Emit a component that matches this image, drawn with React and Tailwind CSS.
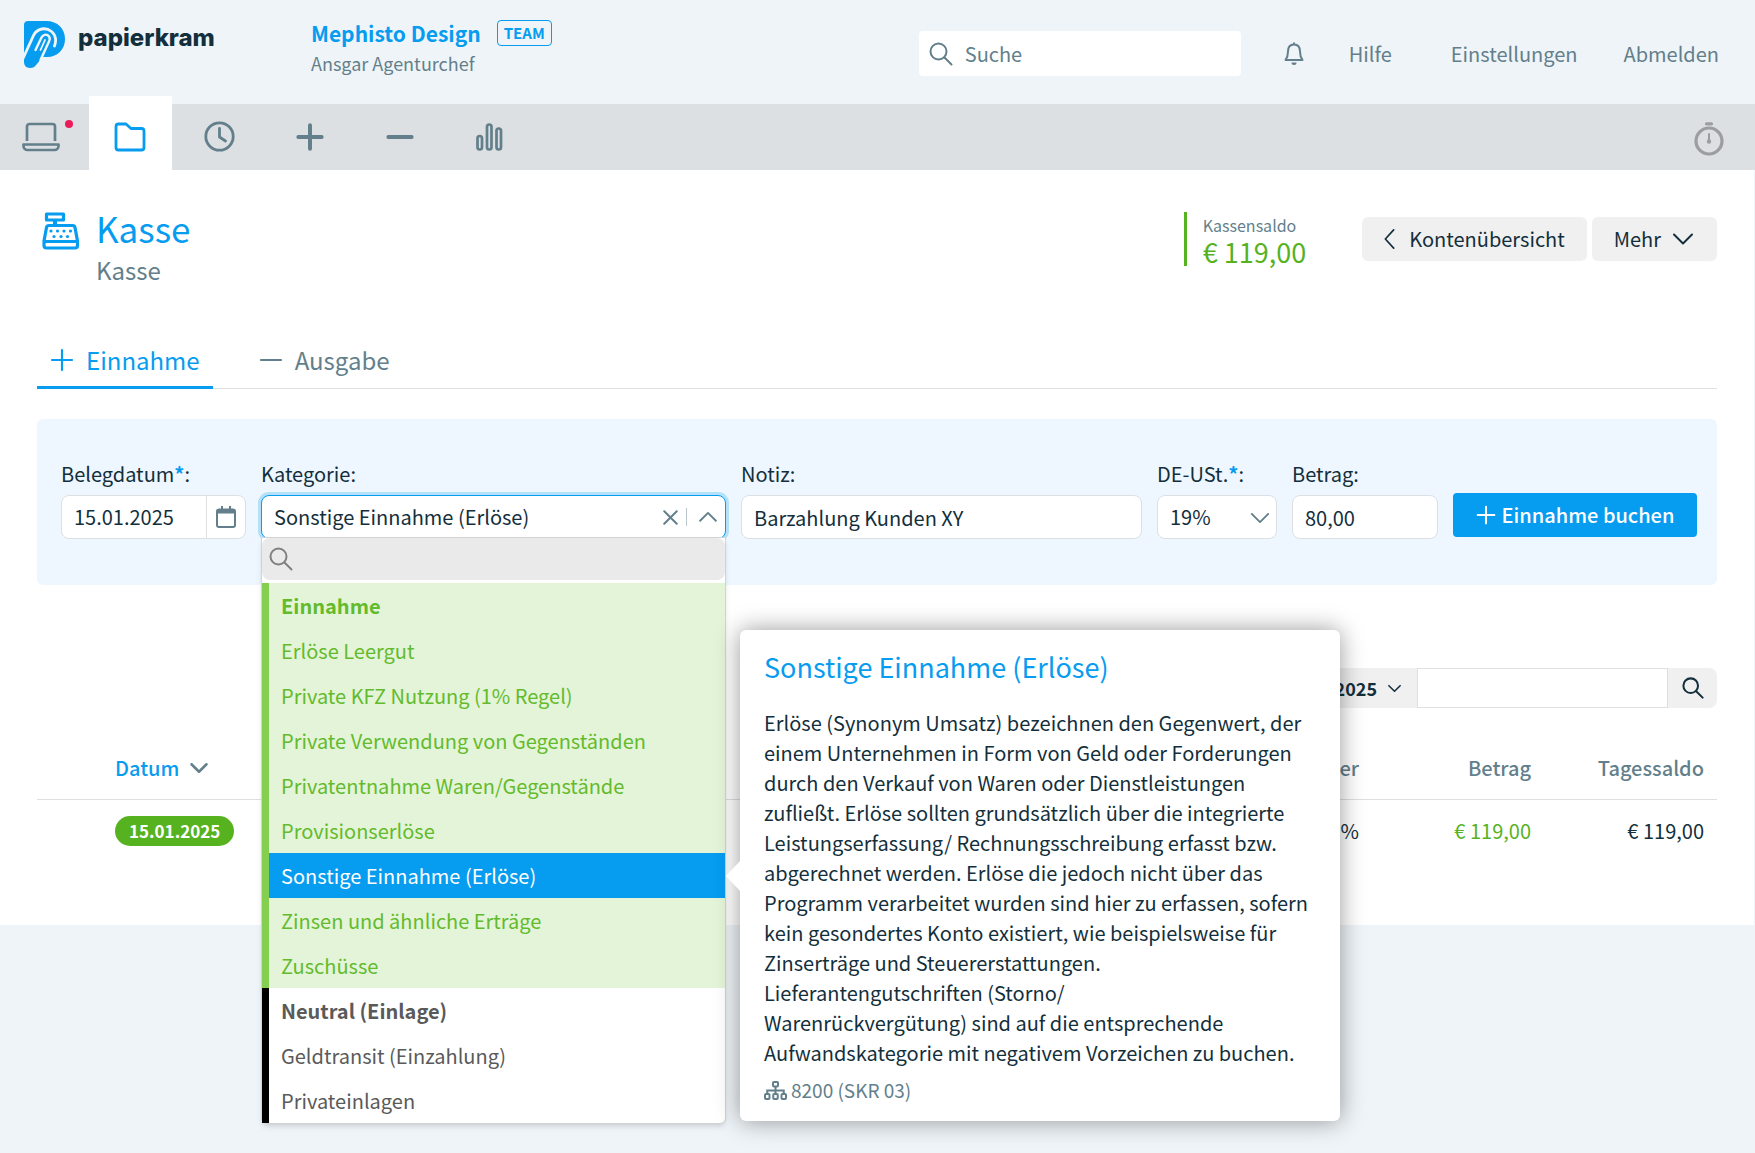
import React, { useState } from 'react';
import clsx from 'clsx';

const Icon = ({ className, size = 24, strokeWidth = 2, children }) => (
  <svg
    className={className}
    width={size}
    height={size}
    viewBox="0 0 24 24"
    fill="none"
    stroke="currentColor"
    strokeWidth={strokeWidth}
    strokeLinecap="round"
    strokeLinejoin="round"
    aria-hidden="true"
  >
    {children}
  </svg>
);

const SearchIcon = (props) => (
  <Icon {...props}>
    <circle cx="9.5" cy="9.5" r="8" />
    <path d="M15.5 15.5l7 7" />
  </Icon>
);

const PlusIcon = (props) => (
  <Icon {...props}>
    <path d="M12 2v20M2 12h20" />
  </Icon>
);

const MinusIcon = (props) => (
  <Icon {...props}>
    <path d="M2 12h20" />
  </Icon>
);

const ChevronDown = (props) => (
  <Icon {...props}>
    <path d="M3 7.5l9 9 9-9" />
  </Icon>
);

const Logo = () => (
  <svg width="42" height="48" viewBox="0 0 42 48" fill="none" aria-hidden="true">
    <path
      d="M4 0H22C34 0 41 8 41 18S34 36 23 36H18.500L12.500 43.500C11 46 9 47 6 47C2 47 0 44 0 41V4C0 1.500 1.500 0 4 0Z"
      fill="#069cf0"
    />
    <path d="M-1 37.500L9.500 14.500C13 7 22 6 27.500 10.500C32 14.500 32.500 19.500 30.500 25" stroke="#eff4f8" strokeWidth="2.800" strokeLinecap="round" />
    <path d="M11.500 29L17.500 16.500C19 13.500 22 13 24 14.500C26 16 26 18.500 25 20.500L16.500 39" stroke="#eff4f8" strokeWidth="2.400" strokeLinecap="round" />
    <path d="M16.500 29L21 19" stroke="#eff4f8" strokeWidth="1.800" strokeLinecap="round" />
  </svg>
);

const LaptopIcon = () => (
  <svg width="38" height="30" viewBox="0 0 38 30" fill="none" stroke="currentColor" strokeWidth="2.700" strokeLinejoin="round" aria-hidden="true">
    <path d="M5 19V4.500a2.500 2.500 0 0 1 2.500-2.500h23a2.500 2.500 0 0 1 2.500 2.500V19" />
    <path d="M1.500 22.500h35v1.500a4 4 0 0 1-4 4h-27a4 4 0 0 1-4-4z" />
  </svg>
);

const FolderIcon = () => (
  <svg width="32" height="30" viewBox="0 0 32 30" fill="none" stroke="currentColor" strokeWidth="2.800" strokeLinejoin="round" aria-hidden="true">
    <path d="M2 4.500A2.500 2.500 0 0 1 4.500 2H12l5 4.500h10.500A2.500 2.500 0 0 1 30 9v16.500a2.500 2.500 0 0 1-2.500 2.500h-23A2.500 2.500 0 0 1 2 25.500z" />
  </svg>
);

const ClockIcon = () => (
  <svg width="32" height="32" viewBox="0 0 32 32" fill="none" stroke="currentColor" strokeWidth="2.800" strokeLinecap="round" strokeLinejoin="round" aria-hidden="true">
    <circle cx="15.500" cy="15.500" r="13.700" />
    <path d="M15.500 7.500V16l6 4" />
  </svg>
);

const ChartIcon = () => (
  <svg width="30" height="28" viewBox="0 0 30 28" fill="none" stroke="currentColor" strokeWidth="2.700" aria-hidden="true">
    <rect x="2.500" y="13" width="4.500" height="13.500" rx="2.250" />
    <rect x="12" y="1.500" width="4.500" height="25" rx="2.250" />
    <rect x="21.500" y="5.500" width="4.500" height="21" rx="2.250" />
  </svg>
);

const StopwatchIcon = () => (
  <svg width="30" height="34" viewBox="0 0 30 34" fill="none" stroke="currentColor" strokeWidth="3.200" strokeLinecap="round" aria-hidden="true">
    <circle cx="15" cy="19" r="13" />
    <path d="M12.500 1.800h5" />
    <path d="M15 12v7" strokeWidth="2" />
    <circle cx="15" cy="19.500" r="1.200" strokeWidth="2" />
  </svg>
);

const BellIcon = () => (
  <svg width="20" height="24" viewBox="0 0 20 24" fill="none" stroke="currentColor" strokeWidth="2" strokeLinejoin="round" aria-hidden="true">
    <path d="M10 2.500C6 2.500 4 5.500 4 9.500c0 5-1 6.500-2.500 8.500h17C17 16 16 14.500 16 9.500c0-4-2-7-6-7zM10 .5v2" />
    <path d="M7.500 20.500h5a2.500 2.500 0 0 1-5 0z" fill="currentColor" stroke="none" />
  </svg>
);

const RegisterIcon = () => (
  <svg width="38" height="38" viewBox="0 0 38 38" fill="none" stroke="currentColor" strokeWidth="3.200" strokeLinejoin="round" aria-hidden="true">
    <path d="M4.500 2h17v6h-17z" />
    <path d="M13 8v5" strokeWidth="4" />
    <path d="M7 13.500h23.500a2.500 2.500 0 0 1 2.500 2L35.500 29v4.500a2.500 2.500 0 0 1-2.500 2.500h-28.500A2.500 2.500 0 0 1 2 33.500V29l2.500-13.500A2.500 2.500 0 0 1 7 13.500zM2 29.500h34" />
    <g fill="currentColor" stroke="none">
      <circle cx="9" cy="19" r="1.600" />
      <circle cx="15.500" cy="19" r="1.600" />
      <circle cx="22" cy="19" r="1.600" />
      <circle cx="28.500" cy="19" r="1.600" />
      <circle cx="12" cy="24.500" r="1.600" />
      <circle cx="19" cy="24.500" r="1.600" />
      <circle cx="25.500" cy="24.500" r="1.600" />
    </g>
  </svg>
);

const CalendarIcon = () => (
  <svg width="20" height="22" viewBox="0 0 20 22" fill="none" stroke="currentColor" strokeWidth="2" strokeLinejoin="round" aria-hidden="true">
    <rect x="1" y="3.500" width="18" height="17.500" rx="2" />
    <path d="M1.500 5.500h17" strokeWidth="4" />
    <path d="M6 0v4M14 0v4" />
  </svg>
);

const SitemapIcon = () => (
  <svg width="23" height="19" viewBox="0 0 23 19" fill="none" stroke="currentColor" strokeWidth="2" aria-hidden="true">
    <rect x="9" y="1" width="5" height="4.500" rx="1" />
    <rect x="1" y="13" width="4.500" height="5" rx="1" />
    <rect x="9.250" y="13" width="4.500" height="5" rx="1" />
    <rect x="17.500" y="13" width="4.500" height="5" rx="1" />
    <path d="M11.500 5.500V13M3.250 13V9.500h16.500V13" />
  </svg>
);

const navItems = [
  { label: 'Übersicht', icon: <LaptopIcon />, dot: true },
  { label: 'Projekte', icon: <FolderIcon />, active: true },
  { label: 'Zeiterfassung', icon: <ClockIcon /> },
  { label: 'Einnahmen', icon: <PlusIcon size={28} strokeWidth={3.4} /> },
  { label: 'Ausgaben', icon: <MinusIcon size={28} strokeWidth={3.4} /> },
  { label: 'Auswertung', icon: <ChartIcon /> },
];

const incomeCategories = [
  'Erlöse Leergut',
  'Private KFZ Nutzung (1% Regel)',
  'Private Verwendung von Gegenständen',
  'Privatentnahme Waren/Gegenstände',
  'Provisionserlöse',
  'Sonstige Einnahme (Erlöse)',
  'Zinsen und ähnliche Erträge',
  'Zuschüsse',
];

const neutralCategories = ['Geldtransit (Einzahlung)', 'Privateinlagen'];

const Header = () => (
  <header className="flex h-[104px] items-start pl-6 pr-9 text-[#637f8b]">
    <a href="#start" className="flex w-[287px] shrink-0 items-start pt-[21px] text-[#132f3c]">
      <Logo />
      <span className="ml-3 font-[Inter,sans-serif] text-2xl leading-[34px] font-extrabold">papierkram</span>
    </a>
    <div className="pt-[17px]">
      <div className="flex items-center gap-4">
        <span className="text-[21px] leading-8 font-bold text-[#069cf0]">Mephisto Design</span>
        <span className="rounded border border-[#069cf0] px-[6px] text-[15px] leading-6 font-bold text-[#069cf0]">TEAM</span>
      </div>
      <div className="text-[18px] leading-7">Ansgar Agenturchef</div>
    </div>
    <div className="ml-auto flex items-center pt-[31px]">
      <label className="flex h-[45px] w-[322px] items-center gap-3 rounded bg-white px-[10px]">
        <SearchIcon size={24} />
        <input type="text" placeholder="Suche" aria-label="Suche" className="min-w-0 flex-1 bg-transparent outline-none placeholder:text-[#637f8b]" />
      </label>
      <button type="button" aria-label="Benachrichtigungen" className="ml-[43px]">
        <BellIcon />
      </button>
      <a href="#hilfe" className="ml-[45px]">Hilfe</a>
      <a href="#einstellungen" className="ml-[59px]">Einstellungen</a>
      <a href="#abmelden" className="ml-[46px]">Abmelden</a>
    </div>
  </header>
);

const MainNav = () => (
  <nav className="flex h-[66px] items-end gap-[7px] bg-[#dce0e3] pr-[31px] text-[#637f8b]">
    {navItems.map((item) => (
      <a
        key={item.label}
        href="#nav"
        aria-label={item.label}
        className={clsx(
          'relative flex items-center justify-center pr-px',
          item.active ? 'h-[74px] bg-white pt-2 text-[#069cf0]' : 'h-[66px]',
          item.dot ? 'w-[82px]' : 'w-[83px]'
        )}
      >
        {item.icon}
        {item.dot && <span className="absolute top-4 right-[9px] size-2 rounded-full bg-[#ec1c5b]" />}
      </a>
    ))}
    <button type="button" aria-label="Stoppuhr" className="ml-auto mb-[14px] text-[#9b9d9e]">
      <StopwatchIcon />
    </button>
  </nav>
);

const PageHeader = () => (
  <div className="flex items-start">
    <div className="pl-[5px] text-[#069cf0]">
      <RegisterIcon />
    </div>
    <div className="ml-4">
      <h1 className="text-[35px] leading-8 text-[#069cf0]">Kasse</h1>
      <p className="mt-[6px] text-2xl leading-10 text-[#637f8b]">Kasse</p>
    </div>
    <div className="ml-auto border-l-[3px] border-[#56b31f] pl-4">
      <div className="text-base leading-[26px] text-[#637f8b]">Kassensaldo</div>
      <div className="text-[27px] leading-7 text-[#56b31f]">€ 119,00</div>
    </div>
    <div className="mt-[5px] ml-14 flex gap-[5px]">
      <a href="#konten" className="flex h-11 items-center rounded-md bg-[#f0f0f0] pr-[22px] pl-5">
        <Icon size={20} className="mr-[7px]">
          <path d="M14 1L4 12l10 11" />
        </Icon>
        Kontenübersicht
      </a>
      <button type="button" className="flex h-11 items-center rounded-md bg-[#f0f0f0] px-[22px]">
        Mehr
        <ChevronDown size={24} className="ml-[10px]" />
      </button>
    </div>
  </div>
);

const Required = () => <span className="font-bold text-[#069cf0]">*</span>;

const CategoryMenu = ({ selected, onSelect }) => (
  <div className="absolute top-[42px] right-0 left-0 z-10 rounded-b-md border border-[#d0d4d6] bg-white shadow-md">
    <label className="mb-[3px] flex h-[42px] items-center rounded-lg bg-[#eaeaea] px-[7px] text-[#808080]">
      <SearchIcon size={24} />
      <input type="text" aria-label="Kategorie suchen" className="ml-2 min-w-0 flex-1 bg-transparent outline-none" />
    </label>
    <ul role="listbox" aria-label="Kategorie" className="overflow-hidden rounded-br-md leading-[45px]">
      <li role="presentation" className="border-l-[7px] border-[#84cf4f] bg-[#e4f4d8] pl-3 font-bold text-[#63bb2c]">
        Einnahme
      </li>
      {incomeCategories.map((name) => (
        <li
          key={name}
          role="option"
          aria-selected={name === selected}
          onClick={() => onSelect(name)}
          className={clsx(
            'cursor-pointer border-l-[7px] border-[#84cf4f] pl-3',
            name === selected ? 'bg-[#069cf0] text-white' : 'bg-[#e4f4d8] text-[#63bb2c]'
          )}
        >
          {name}
        </li>
      ))}
      <li role="presentation" className="border-l-[7px] border-black pl-3 font-bold text-[#5a5a5a]">
        Neutral (Einlage)
      </li>
      {neutralCategories.map((name) => (
        <li
          key={name}
          role="option"
          aria-selected={name === selected}
          onClick={() => onSelect(name)}
          className="cursor-pointer border-l-[7px] border-black pl-3 text-[#5a5a5a]"
        >
          {name}
        </li>
      ))}
    </ul>
  </div>
);

const CategoryHint = () => (
  <div
    role="tooltip"
    className="absolute top-[135px] left-full z-20 ml-[14px] w-[600px] rounded-md bg-white px-6 pt-5 pb-[15px] shadow-[0_0_24px_rgba(0,0,0,0.4)]"
  >
    <svg className="absolute top-[231px] -left-[14px] text-white" width="14" height="30" viewBox="0 0 14 30" aria-hidden="true">
      <path d="M14 0L0 15l14 15z" fill="currentColor" />
    </svg>
    <h2 className="text-[27px] leading-[34px] text-[#069cf0]">Sonstige Einnahme (Erlöse)</h2>
    <p className="mt-6 leading-[30px]">
      Erlöse (Synonym Umsatz) bezeichnen den Gegenwert, der einem Unternehmen in Form von Geld oder Forderungen
      durch den Verkauf von Waren oder Dienstleistungen zufließt. Erlöse sollten grundsätzlich über die integrierte
      Leistungserfassung/ Rechnungsschreibung erfasst bzw. abgerechnet werden. Erlöse die jedoch nicht über das
      Programm verarbeitet wurden sind hier zu erfassen, sofern kein gesondertes Konto existiert, wie
      beispielsweise für Zinserträge und Steuererstattungen. Lieferantengutschriften (Storno/
      <br />
      Warenrückvergütung) sind auf die entsprechende Aufwandskategorie mit negativem Vorzeichen zu buchen.
    </p>
    <p className="mt-[6px] flex items-center gap-1 text-[19px] leading-8 text-[#637f8b]">
      <SitemapIcon />
      8200 (SKR 03)
    </p>
  </div>
);

const BookingForm = () => {
  const [category, setCategory] = useState('Sonstige Einnahme (Erlöse)');
  const [open, setOpen] = useState(true);

  const handleSelect = (name) => {
    setCategory(name);
    setOpen(false);
  };

  return (
    <form className="mt-[30px] flex items-end gap-[15px] rounded-md bg-[#eef7ff] pt-[43px] pr-5 pb-[46px] pl-6">
      <div className="w-[185px] shrink-0">
        <label htmlFor="datum" className="mb-[9px] block leading-6">
          Belegdatum<Required />:
        </label>
        <div className="flex h-11 overflow-hidden rounded-lg border border-[#dce0e3] bg-white">
          <input id="datum" type="text" defaultValue="15.01.2025" className="min-w-0 flex-1 px-3 outline-none" />
          <button type="button" aria-label="Kalender öffnen" className="flex w-[39px] items-center justify-center border-l border-[#dce0e3] text-[#637f8b]">
            <CalendarIcon />
          </button>
        </div>
      </div>

      <div className="w-[465px] shrink-0">
        <label htmlFor="kategorie" className="mb-[9px] block leading-6">Kategorie:</label>
        <div className="relative">
          <div className="flex h-11 items-center rounded-lg border border-[#069cf0] bg-white pr-2 pl-3 text-[#637f8b] ring-3 ring-[#b5e1f8]">
            <button id="kategorie" type="button" aria-expanded={open} onClick={() => setOpen(!open)} className="flex-1 text-left text-[#132f3c]">
              {category}
            </button>
            <button type="button" aria-label="Auswahl löschen" onClick={() => setCategory('')}>
              <Icon size={15} strokeWidth={3.2}>
                <path d="M2 2l20 20M22 2L2 22" />
              </Icon>
            </button>
            <span className="mr-3 ml-2 h-[18px] w-px bg-[#b9c6cc]" />
            <Icon size={18} strokeWidth={2.5}>
              <path d="M1.500 17L12 6.500 22.500 17" />
            </Icon>
          </div>
          {open && <CategoryMenu selected={category} onSelect={handleSelect} />}
          {open && <CategoryHint />}
        </div>
      </div>

      <div className="min-w-0 flex-1">
        <label htmlFor="notiz" className="mb-[9px] block leading-6">Notiz:</label>
        <input id="notiz" type="text" defaultValue="Barzahlung Kunden XY" className="h-11 w-full rounded-lg border border-[#dce0e3] bg-white px-3 outline-none" />
      </div>

      <div className="w-[120px] shrink-0">
        <label htmlFor="ust" className="mb-[9px] block leading-6">
          DE-USt.<Required />:
        </label>
        <div className="relative">
          <select id="ust" defaultValue="19" className="h-11 w-full appearance-none rounded-lg border border-[#dce0e3] bg-white px-3 outline-none">
            <option value="19">19%</option>
            <option value="7">7%</option>
            <option value="0">0%</option>
          </select>
          <ChevronDown size={22} className="pointer-events-none absolute top-3 right-[6px] text-[#637f8b]" />
        </div>
      </div>

      <div className="w-[146px] shrink-0">
        <label htmlFor="betrag" className="mb-[9px] block leading-6">Betrag:</label>
        <input id="betrag" type="text" defaultValue="80,00" className="h-11 w-full rounded-lg border border-[#dce0e3] bg-white px-3 outline-none" />
      </div>

      <button type="button" className="mb-0.5 flex h-11 w-[244px] shrink-0 items-center justify-center gap-[6px] rounded bg-[#069cf0] font-medium text-white">
        <PlusIcon size={20} strokeWidth={2.5} />
        Einnahme buchen
      </button>
    </form>
  );
};

const EntryFilter = () => (
  <div className="mt-[83px] flex h-10 justify-end">
    <button type="button" className="flex items-center gap-[10px] rounded-l-lg bg-[#f0f0f0] pr-[15px] pl-4 text-[18px] font-bold">
      2025
      <ChevronDown size={15} strokeWidth={2.5} />
    </button>
    <input type="text" aria-label="Buchungen durchsuchen" className="w-[251px] border border-[#dce0e3] bg-white px-3 outline-none" />
    <button type="button" aria-label="Suchen" className="flex w-[49px] items-center justify-center rounded-r-lg bg-[#f0f0f0]">
      <SearchIcon size={22} strokeWidth={2.2} />
    </button>
  </div>
);

const EntryTable = () => (
  <table className="mt-[31px] w-full text-right">
    <thead>
      <tr className="h-[60px] border-b border-[#dce0e3] text-[#637f8b]">
        <th scope="col" className="pb-0.5 pl-[78px] text-left font-medium text-[#069cf0]">
          <button type="button" className="flex items-center gap-[10px]">
            Datum
            <ChevronDown size={20} strokeWidth={3} className="text-[#637f8b]" />
          </button>
        </th>
        <th scope="col" className="w-[120px] pb-0.5 font-medium">Steuer</th>
        <th scope="col" className="w-[172px] pb-0.5 font-medium">Betrag</th>
        <th scope="col" className="w-[186px] pr-[13px] pb-0.5 font-medium">Tagessaldo</th>
      </tr>
    </thead>
    <tbody>
      <tr className="h-[63px]">
        <td className="pl-[78px] text-left">
          <span className="inline-block rounded-full bg-[#56b31f] px-[14px] text-[17px] leading-[30px] font-bold text-white">15.01.2025</span>
        </td>
        <td>19%</td>
        <td className="text-[#56b31f]">€ 119,00</td>
        <td className="pr-[13px]">€ 119,00</td>
      </tr>
    </tbody>
  </table>
);

const App = () => {
  const [tab, setTab] = useState('einnahme');

  return (
    <div className="min-h-screen bg-[#eff4f8] font-['Noto_Sans_CJK_SC',sans-serif] text-[20px] leading-7 text-[#132f3c]">
      <Header />
      <MainNav />
      <main className="border-r border-[#eff4f8] bg-white px-[37px] pt-[42px] pb-[63px]">
        <PageHeader />

        <div role="tablist" className="mt-11 flex border-b border-[#dce0e3] text-2xl">
          <button
            type="button"
            role="tab"
            aria-selected={tab === 'einnahme'}
            onClick={() => setTab('einnahme')}
            className={clsx(
              '-mb-px flex h-[55px] items-center gap-3 border-b-[3px] px-[13px]',
              tab === 'einnahme' ? 'border-[#069cf0] text-[#069cf0]' : 'border-transparent text-[#637f8b]'
            )}
          >
            <PlusIcon size={24} strokeWidth={2.2} />
            Einnahme
          </button>
          <button
            type="button"
            role="tab"
            aria-selected={tab === 'ausgabe'}
            onClick={() => setTab('ausgabe')}
            className={clsx(
              '-mb-px ml-[33px] flex h-[55px] items-center gap-3 border-b-[3px] px-[13px]',
              tab === 'ausgabe' ? 'border-[#069cf0] text-[#069cf0]' : 'border-transparent text-[#637f8b]'
            )}
          >
            <MinusIcon size={24} strokeWidth={2.2} />
            Ausgabe
          </button>
        </div>

        <BookingForm />
        <EntryFilter />
        <EntryTable />
      </main>
    </div>
  );
};

export default App;
